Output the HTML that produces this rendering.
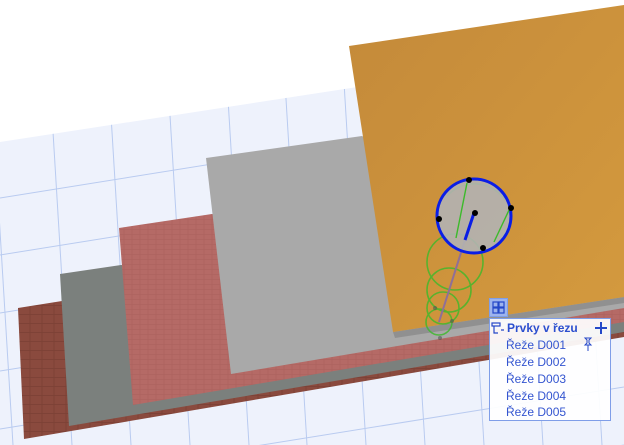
<!DOCTYPE html>
<html><head><meta charset="utf-8"><style>
html,body{margin:0;padding:0;width:624px;height:445px;overflow:hidden;background:#fff;font-family:"Liberation Sans",sans-serif;position:relative}
.sv{position:absolute;left:0;top:0}
.pop{position:absolute;left:489px;top:318px;width:120px;height:101px;border:1px solid #7f9ee8;background:rgba(255,255,255,0.93);overflow:hidden}
.pop svg{position:absolute}
.hd{position:absolute;left:17px;top:2px;font-size:12px;font-weight:bold;color:#2b4fcf}
.it{position:absolute;left:16px;font-size:12px;color:#3455d0}
.ic{position:absolute;left:489px;top:298px;width:19px;height:19px;background:#9db4ee;border:1px solid #7f9ee8;box-sizing:border-box;overflow:hidden}
</style></head><body>
<svg class="sv" width="624" height="445" viewBox="0 0 624 445">
<defs>
<clipPath id="g"><polygon points="0,142 624,46 624,445 0,445"/></clipPath>
<pattern id="brk" width="8" height="5" patternUnits="userSpaceOnUse"><rect width="8" height="5" fill="#b56a66"/><path d="M0 4.5H8M4 0V4.5" stroke="#aa605c" stroke-width="0.6"/></pattern>
<pattern id="dbrk" width="12" height="9" patternUnits="userSpaceOnUse"><rect width="12" height="9" fill="#8a4a3e"/><path d="M0 8.5H12M6 0V8.5" stroke="#7a3f34" stroke-width="0.7"/></pattern>
<linearGradient id="or" x1="0" y1="0" x2="1" y2="1"><stop offset="0" stop-color="#c48a3a"/><stop offset="1" stop-color="#d49a3e"/></linearGradient>
</defs>
<g clip-path="url(#g)">
<rect width="624" height="445" fill="#eef2fc"/>
<g stroke="#b9cbf0" stroke-width="1">
<line x1="-14" y1="0" x2="13" y2="445"/><line x1="45" y1="0" x2="72" y2="445"/><line x1="104" y1="0" x2="131" y2="445"/><line x1="163" y1="0" x2="190" y2="445"/><line x1="222" y1="0" x2="249" y2="445"/><line x1="280" y1="0" x2="307" y2="445"/><line x1="339" y1="0" x2="366" y2="445"/><line x1="398" y1="0" x2="425" y2="445"/><line x1="457" y1="0" x2="484" y2="445"/><line x1="516" y1="0" x2="543" y2="445"/><line x1="575" y1="0" x2="602" y2="445"/>
<line x1="0" y1="198" x2="624" y2="98"/><line x1="0" y1="255" x2="624" y2="155"/><line x1="0" y1="313" x2="624" y2="213"/><line x1="0" y1="371" x2="624" y2="271"/><line x1="0" y1="429" x2="624" y2="329"/><line x1="0" y1="487" x2="624" y2="387"/><line x1="0" y1="545" x2="624" y2="445"/>
</g>
</g>
<polygon points="18,308 62,301 624,300 624,337 24,439" fill="url(#dbrk)"/>
<polygon points="60,274 121,265 624,300 624,332 69,426" fill="#7b807d"/>
<polygon points="119,228 212,214 624,300 624,322 133,405" fill="url(#brk)"/>
<polygon points="206,158 362,136 624,296 624,308 231,374" fill="#a9a9a9"/>
<polygon points="393,332 624,297 624,303 395,338" fill="#909090"/>
<polygon points="349,46 624,5 624,297 393,332" fill="url(#or)"/>
<g fill="none" stroke="#3cba2a" stroke-width="1.6" opacity="0.8">
<circle cx="455" cy="262" r="28"/><circle cx="449" cy="290" r="22"/><circle cx="443" cy="308" r="16"/><circle cx="439" cy="322" r="13"/>
<path d="M447 196 A37 37 0 0 1 505 200"/>
</g>
<line x1="465" y1="240" x2="439" y2="322" stroke="#8f6f98" stroke-width="2"/>
<circle cx="474" cy="216" r="37" fill="#b3b3b3" fill-opacity="0.9" stroke="#0a1ee6" stroke-width="3"/>
<line x1="474" y1="213" x2="465" y2="240" stroke="#0a1ee6" stroke-width="3"/>
<g fill="none" stroke="#3cba2a" stroke-width="1.4"><line x1="467" y1="183" x2="456" y2="238"/><line x1="510" y1="208" x2="494" y2="242"/></g>
<g fill="#000"><circle cx="469" cy="180" r="3"/><circle cx="511" cy="208" r="3"/><circle cx="439" cy="219" r="3"/><circle cx="483" cy="248" r="3"/><circle cx="475" cy="213" r="3"/></g>
<g fill="#555" opacity="0.6"><circle cx="435" cy="308" r="2"/><circle cx="452" cy="321" r="2"/><circle cx="440" cy="338" r="2"/></g>
</svg>
<div class="ic"><svg width="17" height="17" viewBox="0 0 17 17" style="position:absolute;left:0;top:0"><g fill="none" stroke="#2548c8" stroke-width="1.2"><rect x="3" y="3" width="5" height="5"/><rect x="9" y="3" width="5" height="5"/><rect x="3" y="9" width="5" height="5"/><rect x="9" y="9" width="5" height="5"/></g></svg></div>
<div class="pop">
<svg width="14" height="14" viewBox="0 0 14 14" style="left:1px;top:2px"><g fill="none" stroke="#2548c8" stroke-width="1.2"><rect x="1" y="2" width="8" height="3"/><path d="M3 5V12H7M10 9H13"/></g></svg>
<div class="hd">Prvky v řezu</div>
<svg width="14" height="14" viewBox="0 0 14 14" style="left:104px;top:2px"><path d="M7 1V13M1 7H13" stroke="#2548c8" stroke-width="2"/></svg>
<div class="it" style="top:19px">Řeže D001</div>
<svg width="10" height="14" viewBox="0 0 10 14" style="left:93px;top:18px"><path d="M2 1H8L6 3V6L8 8H2L4 6V3ZM5 8V14" fill="none" stroke="#2548c8" stroke-width="1"/></svg>
<div class="it" style="top:36px">Řeže D002</div>
<div class="it" style="top:53px">Řeže D003</div>
<div class="it" style="top:70px">Řeže D004</div>
<div class="it" style="top:86px">Řeže D005</div>
</div>
</body></html>
